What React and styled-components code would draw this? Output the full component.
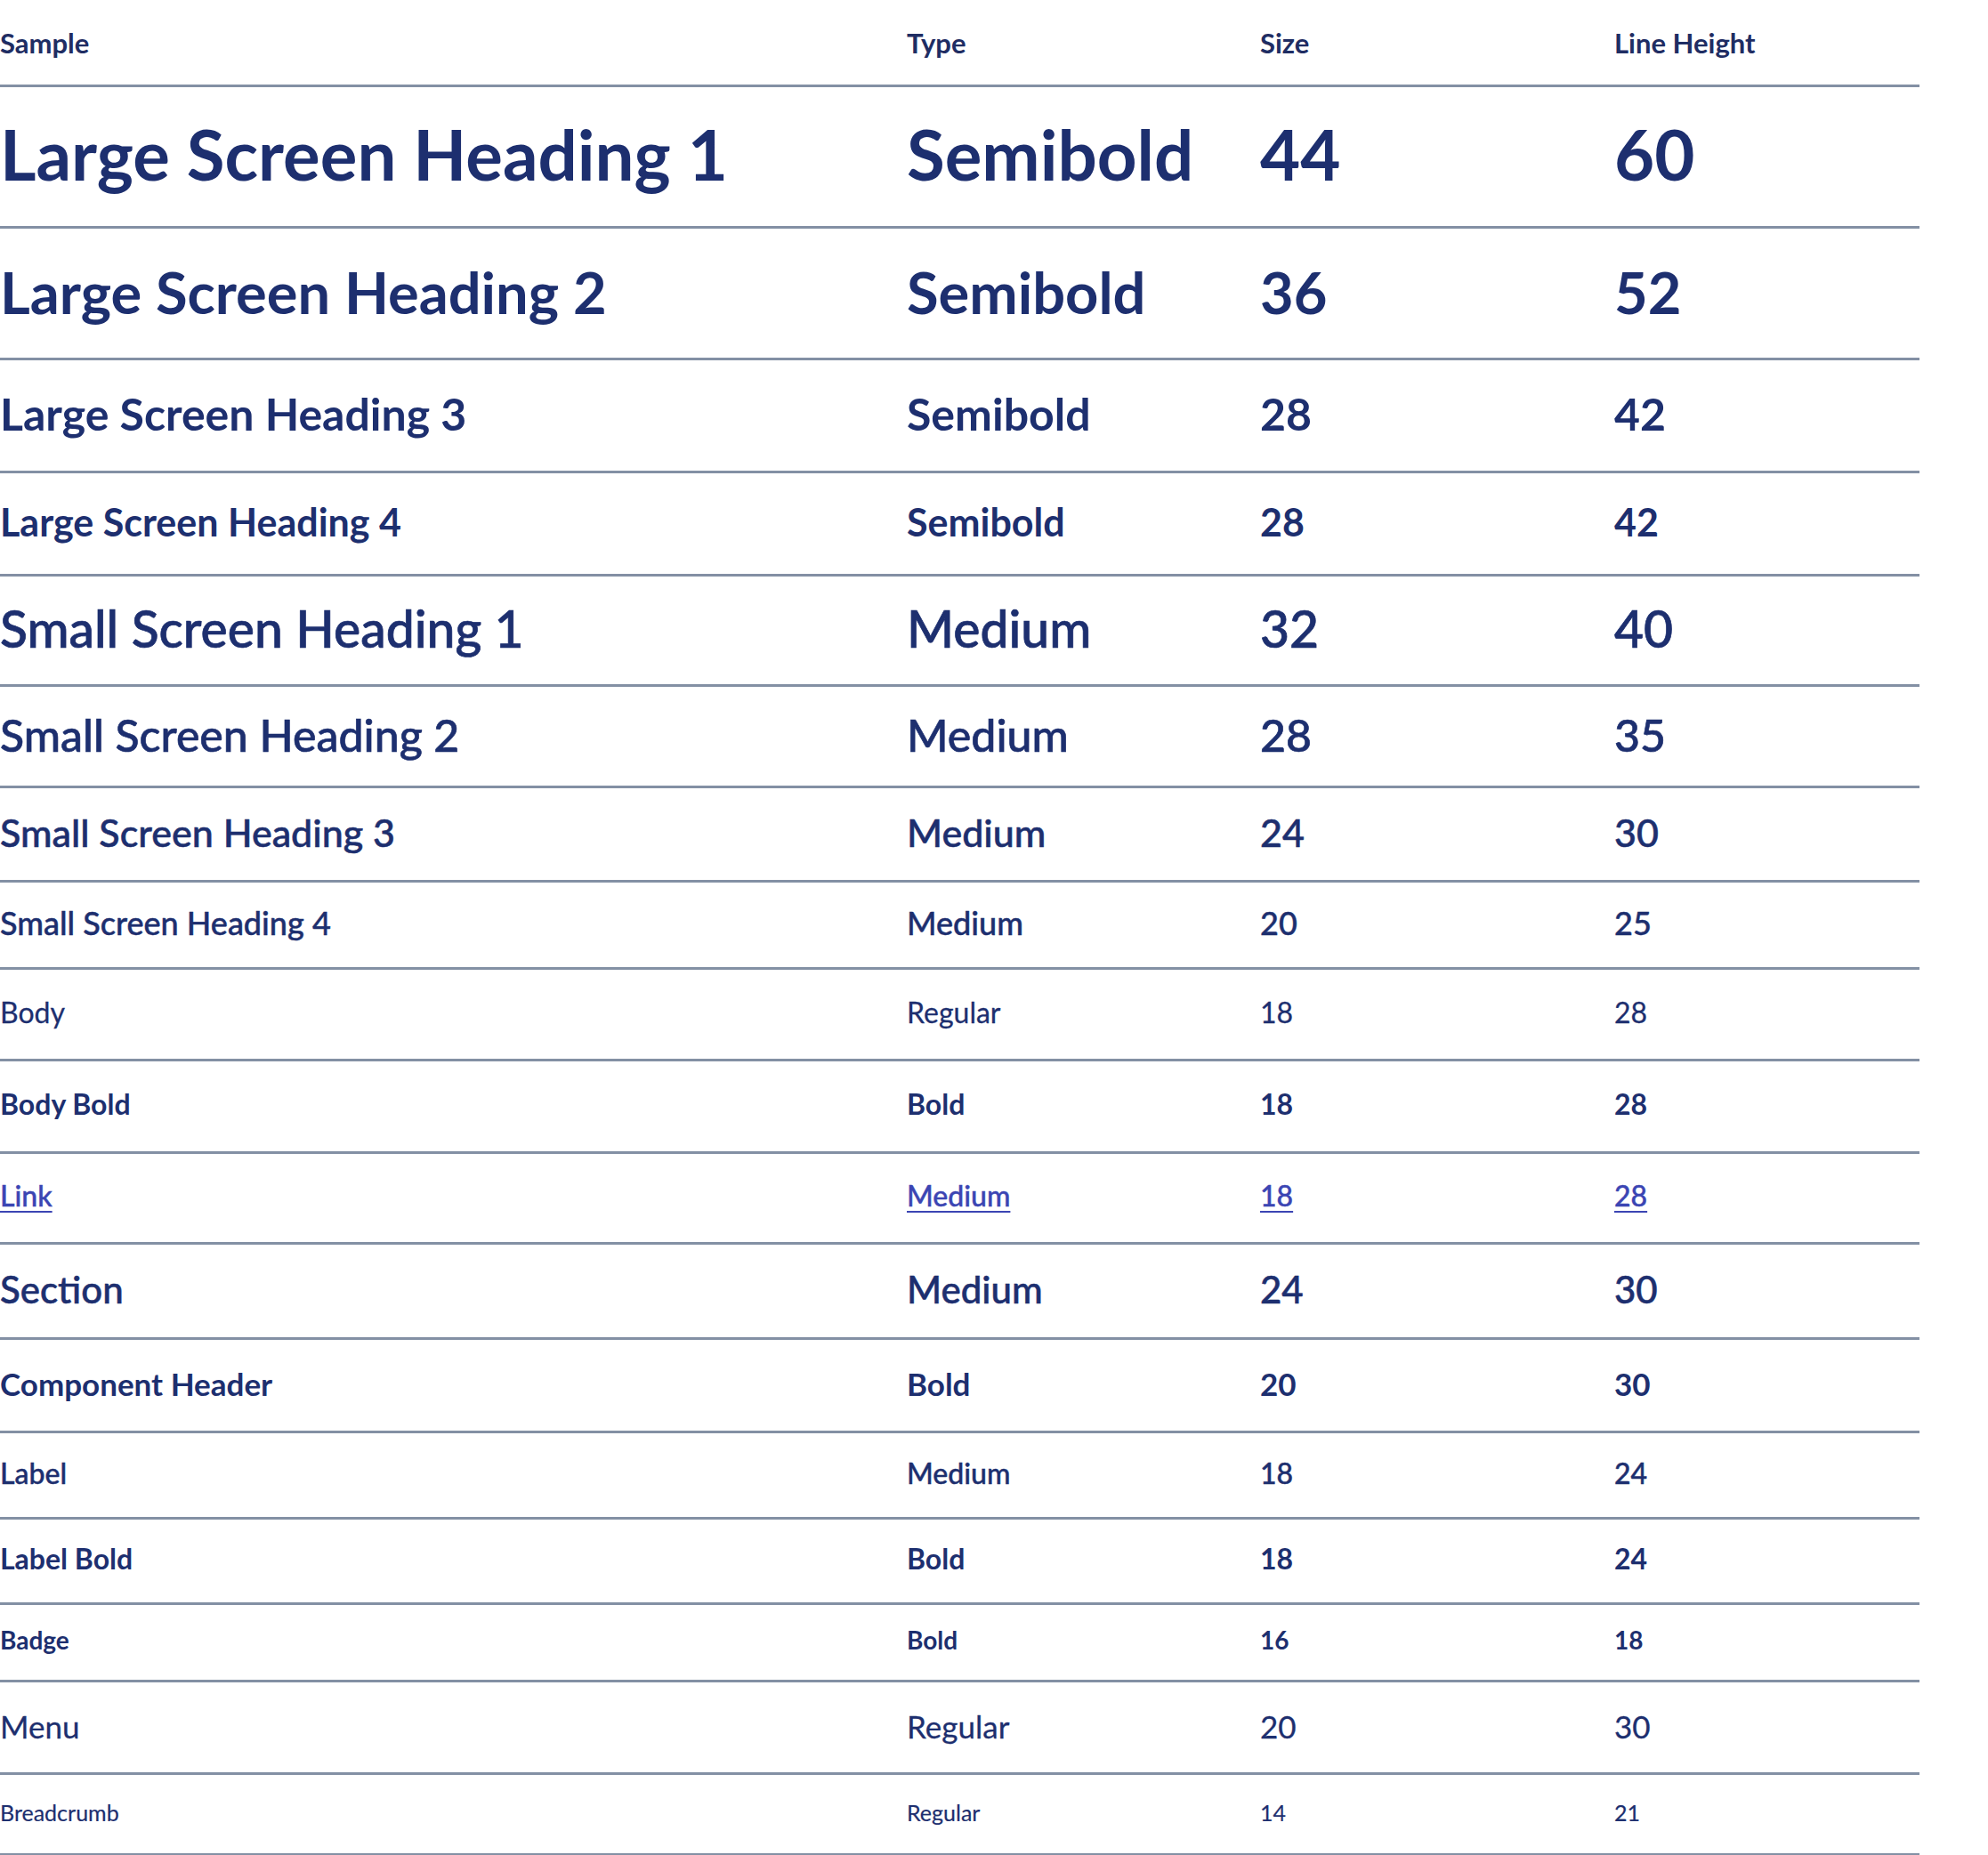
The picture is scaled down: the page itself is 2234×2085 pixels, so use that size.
import React from 'react';
import styled, { createGlobalStyle } from 'styled-components';

const GlobalStyle = createGlobalStyle`
  html, body {
    margin: 0;
    padding: 0;
    background: #ffffff;
  }
  body {
    font-family: 'Lato', 'Noto Sans', sans-serif;
    color: #1d2f6f;
  }
`;

// fs/h are the pixel values measured off the spec sheet
const rows = [
  { sample: 'Large Screen Heading 1', type: 'Semibold', size: 44, lh: 60, fs: 78, weight: 700, h: 159 },
  { sample: 'Large Screen Heading 2', type: 'Semibold', size: 36, lh: 52, fs: 65, weight: 700, h: 148 },
  { sample: 'Large Screen Heading 3', type: 'Semibold', size: 28, lh: 42, fs: 50, weight: 700, h: 127 },
  { sample: 'Large Screen Heading 4', type: 'Semibold', size: 28, lh: 42, fs: 43, weight: 700, h: 116 },
  { sample: 'Small Screen Heading 1', type: 'Medium', size: 32, lh: 40, fs: 57, weight: 500, h: 124 },
  { sample: 'Small Screen Heading 2', type: 'Medium', size: 28, lh: 35, fs: 50, weight: 500, h: 114 },
  { sample: 'Small Screen Heading 3', type: 'Medium', size: 24, lh: 30, fs: 43, weight: 500, h: 106 },
  { sample: 'Small Screen Heading 4', type: 'Medium', size: 20, lh: 25, fs: 36, weight: 500, h: 98 },
  { sample: 'Body', type: 'Regular', size: 18, lh: 28, fs: 32, weight: 400, h: 103 },
  { sample: 'Body Bold', type: 'Bold', size: 18, lh: 28, fs: 32, weight: 700, h: 104 },
  { sample: 'Link', type: 'Medium', size: 18, lh: 28, fs: 32, weight: 500, h: 102, link: true },
  { sample: 'Section', type: 'Medium', size: 24, lh: 30, fs: 42, weight: 500, h: 107 },
  { sample: 'Component Header', type: 'Bold', size: 20, lh: 30, fs: 35, weight: 700, h: 105 },
  { sample: 'Label', type: 'Medium', size: 18, lh: 24, fs: 32, weight: 500, h: 97 },
  { sample: 'Label Bold', type: 'Bold', size: 18, lh: 24, fs: 32, weight: 700, h: 96 },
  { sample: 'Badge', type: 'Bold', size: 16, lh: 18, fs: 28, weight: 700, h: 87 },
  { sample: 'Menu', type: 'Regular', size: 20, lh: 30, fs: 35, weight: 400, h: 104 },
  { sample: 'Breadcrumb', type: 'Regular', size: 14, lh: 21, fs: 25, weight: 400, h: 91 },
];

const strokeFor = (weight, fs) => {
  if (weight === 500) return (fs * 0.013).toFixed(2);
  if (weight === 400) return (fs * 0.008).toFixed(2);
  return 0;
};

const App = () => {
  return (
    <>
      <GlobalStyle />
      <Table>
        <HeaderRow>
          <HeaderCell>Sample</HeaderCell>
          <HeaderCell>Type</HeaderCell>
          <HeaderCell>Size</HeaderCell>
          <HeaderCell>Line Height</HeaderCell>
        </HeaderRow>
        {rows.map((row) => (
          <Row key={row.sample} $h={row.h}>
            {[row.sample, row.type, row.size, row.lh].map((value, i) => (
              <Cell
                key={i}
                $fs={row.fs}
                $weight={row.weight}
                $stroke={strokeFor(row.weight, row.fs)}
                $link={row.link}
              >
                {value}
              </Cell>
            ))}
          </Row>
        ))}
      </Table>
    </>
  );
};

export default App;

const Table = styled.div`
  width: 2157px;
  display: flex;
  flex-direction: column;
`;

const HeaderRow = styled.div`
  display: grid;
  grid-template-columns: 1019px 397px 398px 1fr;
  align-items: center;
  height: 98px;
  box-sizing: border-box;
  border-bottom: 3px solid #8390a4;
`;

const HeaderCell = styled.div`
  font-size: 31px;
  font-weight: 700;
  color: #1f2d63;
  white-space: nowrap;
`;

const Row = styled(HeaderRow)`
  height: ${(p) => p.$h}px;
`;

const Cell = styled.div`
  font-size: ${(p) => p.$fs}px;
  font-weight: ${(p) => p.$weight};
  line-height: 1.2;
  margin-top: -4px;
  white-space: nowrap;
  color: ${(p) => (p.$link ? '#3b45b3' : '#1d2f6f')};
  -webkit-text-stroke: ${(p) => p.$stroke}px currentColor;
  text-decoration: ${(p) => (p.$link ? 'underline' : 'none')};
  text-decoration-thickness: 2px;
  text-underline-offset: 5px;
`;
